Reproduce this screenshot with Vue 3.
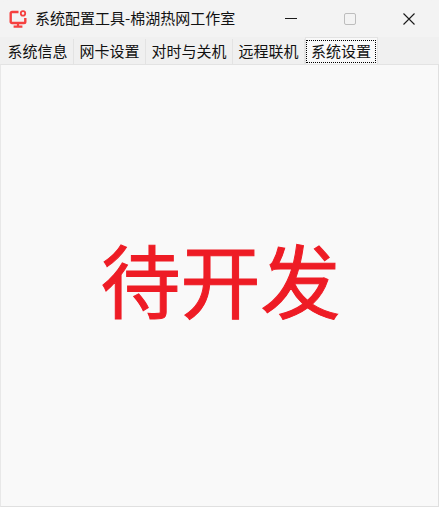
<script setup>
const tabs = [
  { label: '系统信息', width: 72 },
  { label: '网卡设置', width: 72 },
  { label: '对时与关机', width: 87 },
  { label: '远程联机', width: 72 },
  { label: '系统设置', width: 73, active: true }
]
</script>

<template>
  <div class="window">
    <header class="titlebar">
      <svg class="logo" width="18" height="18" viewBox="0 0 18 18" fill="none">
        <path d="M9.5 2H3a1.3 1.3 0 0 0-1.3 1.3v8.4A1.3 1.3 0 0 0 3 13h12a1.3 1.3 0 0 0 1.3-1.3V8" stroke="#f5403f" stroke-width="2.4"/>
        <circle cx="14" cy="3.4" r="2.2" stroke="#f5403f" stroke-width="1.8"/>
        <path d="M9 13v3.2M4.6 16.6h8.8" stroke="#f5403f" stroke-width="2.2"/>
      </svg>
      <span class="title">系统配置工具-棉湖热网工作室</span>
      <div class="controls">
        <span class="ctl"><i class="min"></i></span>
        <span class="ctl"><i class="max"></i></span>
        <span class="ctl">
          <svg width="12" height="12" viewBox="0 0 12 12"><path d="M.5.5l11 11M11.5.5l-11 11" stroke="#1a1a1a" stroke-width="1.1"/></svg>
        </span>
      </div>
    </header>
    <nav class="tabs">
      <div
        v-for="t in tabs"
        :key="t.label"
        class="tab"
        :class="{ active: t.active }"
        :style="{ width: t.width + 'px' }"
      >
        <span class="tab-text">{{ t.label }}</span>
      </div>
    </nav>
    <main class="content">
      <div class="big">待开发</div>
    </main>
  </div>
</template>

<style>
html, body { margin: 0; background: #f3f3f3; }
</style>

<style scoped>
.window {
  width: 439px;
  height: 507px;
  box-sizing: border-box;
  display: flex;
  flex-direction: column;
  background: #f3f3f3;
  font-family: "Noto Sans CJK SC", "Liberation Sans", sans-serif;
  color: #111;
  border-radius: 8px 8px 0 0;
  overflow: hidden;
}
.titlebar {
  height: 37px;
  flex: none;
  display: flex;
  align-items: center;
  padding-left: 9px;
}
.logo { flex: none; }
.title { margin-left: 8px; margin-bottom: 1px; font-size: 15px; line-height: 20px; white-space: nowrap; }
.controls { margin-left: auto; display: flex; height: 37px; padding-right: 1px; }
.ctl { width: 59px; display: flex; align-items: center; justify-content: center; }
.min { display: block; width: 12px; height: 1px; background: #1a1a1a; }
.max { display: block; width: 10px; height: 10px; border: 1px solid #bdbdbd; border-radius: 2px; }
.tabs {
  height: 27px;
  flex: none;
  display: flex;
  align-items: flex-end;
  padding-left: 2px;
  background: #f0f0f0;
  box-sizing: border-box;
}
.tab {
  height: 25px;
  box-sizing: border-box;
  display: flex;
  align-items: center;
  justify-content: center;
  font-size: 15px;
  line-height: 22px;
  padding-bottom: 2px;
  background: #f0f0f0;
  border-right: 1px solid #e3e3e3;
  white-space: nowrap;
}
.tab.active {
  height: 27px;
  background: #f9f9f9;
  border: 1px solid #e3e3e3;
  border-bottom: none;
  padding: 2px 1px 1px 0;
}
.tab.active .tab-text {
  outline: 1px dotted #000;
  outline-offset: -1px;
  width: 100%;
  text-align: center;
  line-height: 21px;
  padding-bottom: 2px;
}
.content {
  flex: 1;
  display: flex;
  align-items: center;
  justify-content: center;
  background: #f9f9f9;
  border-top: 1px solid #e3e3e3;
  border-left: 1px solid #e8e8e8;
  border-right: 1px solid #e0e0e0;
  border-bottom: 1px solid #e0e0e0;
}
.big {
  font-size: 80px;
  line-height: 100px;
  color: #ee1c25;
  -webkit-text-stroke: 1px #ee1c25;
  margin-bottom: 18px;
  margin-left: 2px;
}
</style>
